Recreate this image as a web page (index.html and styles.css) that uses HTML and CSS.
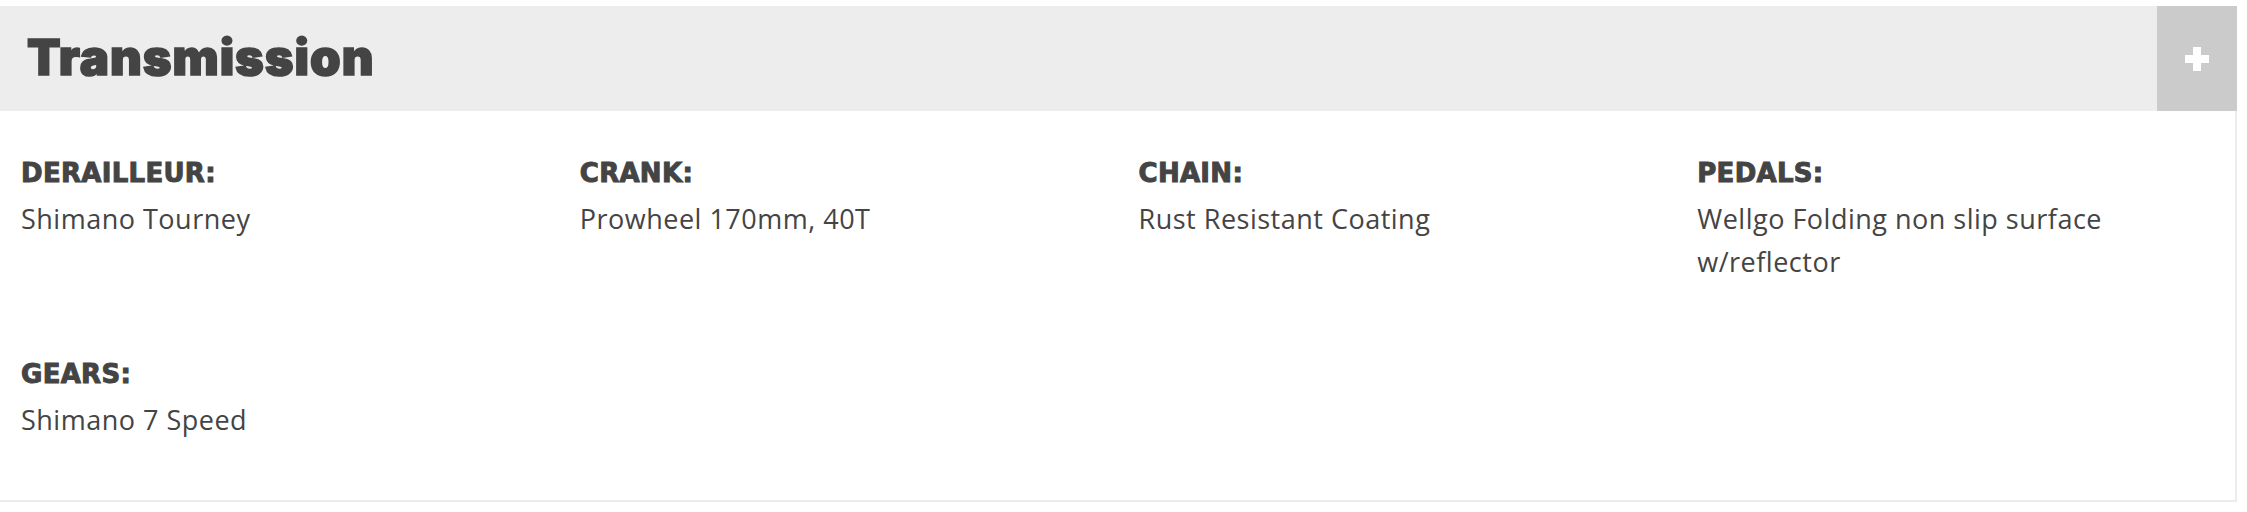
FILE: index.html
```html
<!DOCTYPE html>
<html>
	<head>
		<meta charset="UTF-8">
		<title>Transmission</title>
		<link rel="stylesheet" href="styles.css">
	</head>
	<body>
		<div class="panel">
			<div class="panel-head">
				<h2>Transmission</h2>
				<span class="toggle"><i class="plus"></i></span>
			</div>
			<div class="specs">
				<div class="spec">
					<h4>DERAILLEUR:</h4>
					<p>Shimano Tourney</p>
				</div>
				<div class="spec">
					<h4>CRANK:</h4>
					<p>Prowheel 170mm, 40T</p>
				</div>
				<div class="spec">
					<h4>CHAIN:</h4>
					<p>Rust Resistant Coating</p>
				</div>
				<div class="spec">
					<h4>PEDALS:</h4>
					<p>Wellgo Folding non slip surface w/reflector</p>
				</div>
				<div class="spec">
					<h4>GEARS:</h4>
					<p>Shimano 7 Speed</p>
				</div>
			</div>
		</div>
	</body>
</html>
```

FILE: styles.css
```css
* {
	margin: 0;
	padding: 0;
}
body {
	background: #fff;
	color: #444;
	font-family: "Open Sans", "Liberation Sans", sans-serif;
}
.panel {
	width: 2235px;
	margin-top: 6px;
	border-right: 2px solid #ececec;
	border-bottom: 2px solid #ececec;
}
.panel-head {
	display: flex;
	align-items: center;
	height: 105px;
	background: #ededed;
}
.panel-head h2 {
	flex: 1;
	padding: 0 0 2px 27px;
	font: 900 49px/1 "Inter", sans-serif;
	letter-spacing: 0.95px;
	-webkit-text-stroke: 1.6px #444;
	color: #444;
}
.toggle {
	display: flex;
	align-items: center;
	justify-content: center;
	width: 80px;
	height: 100%;
	margin-right: -2px;
	background: #cbcbcb;
}
.plus {
	position: relative;
	width: 24px;
	height: 24px;
}
.plus:before,
.plus:after {
	content: "";
	position: absolute;
	background: #fff;
}
.plus:before {
	left: 0;
	right: 0;
	top: 8px;
	height: 8px;
}
.plus:after {
	top: 0;
	bottom: 0;
	left: 8px;
	width: 8px;
}
.specs {
	display: grid;
	grid-template-columns: repeat(4, 1fr);
	row-gap: 76px;
	padding: 47px 0 59px;
}
.spec {
	padding: 0 60px 0 21px;
}
.spec h4 {
	font: bold 26px/30px "DejaVu Sans", sans-serif;
	letter-spacing: 0.3px;
	-webkit-text-stroke: 1px #444;
	color: #444;
}
.spec p {
	margin-top: 9px;
	font-size: 27px;
	letter-spacing: 0.5px;
	line-height: 43px;
}
```
